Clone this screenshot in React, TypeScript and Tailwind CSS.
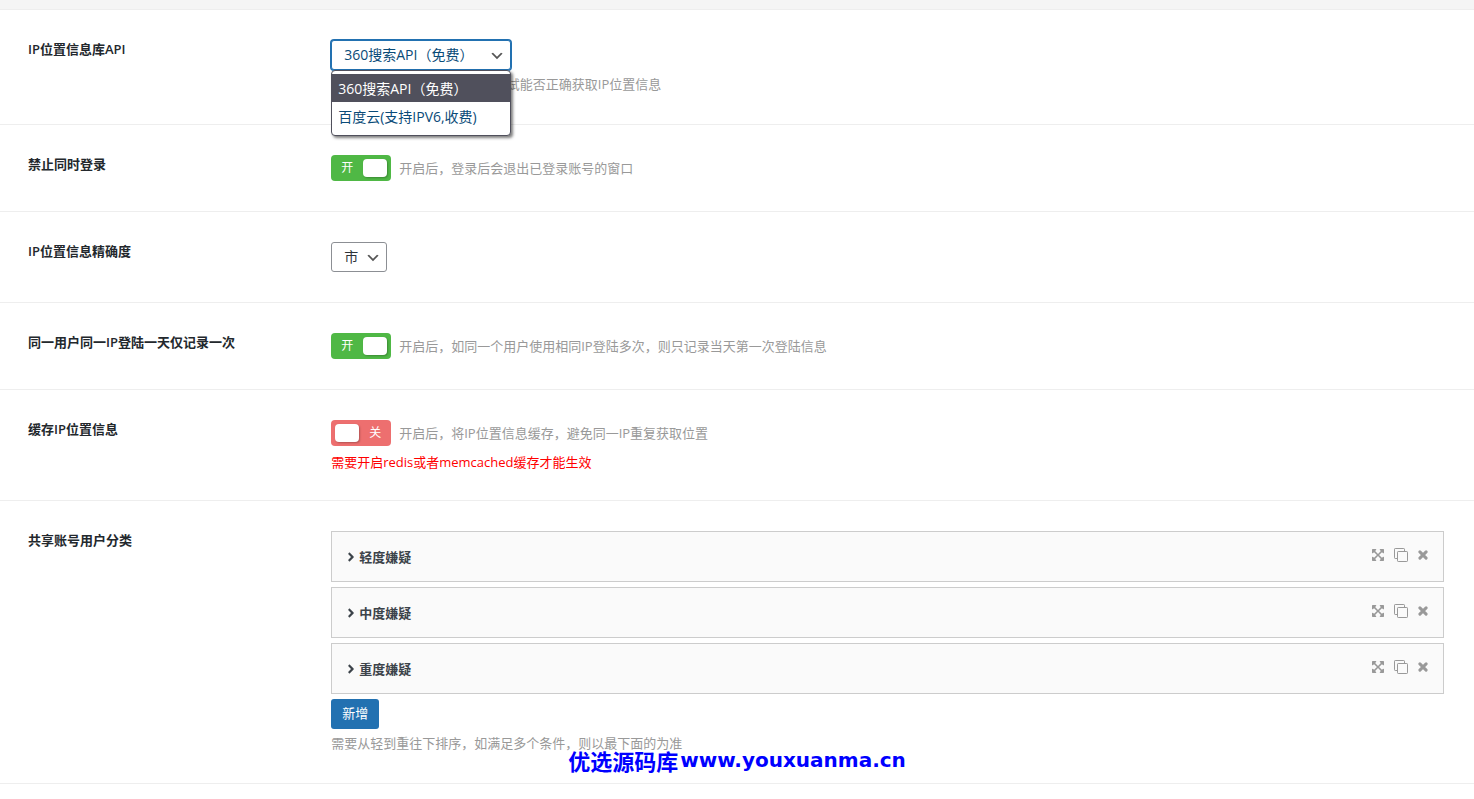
import React, { useState } from 'react';
import { FaAngleRight, FaExpandArrowsAlt } from 'react-icons/fa';

interface FieldProps {
  title: string;
  htmlFor?: string;
  children: React.ReactNode;
}

interface SwitcherProps {
  id: string;
  hint: string;
  defaultChecked?: boolean;
}

const apiOptions = ['360搜索API（免费）', '百度云(支持IPV6,收费)'];
const levels = ['轻度嫌疑', '中度嫌疑', '重度嫌疑'];

const Field: React.FC<FieldProps> = ({ title, htmlFor, children }) => (
  <div className="flex gap-5 border-b border-[#eee] py-[30px] pr-[30px] pl-7">
    <div className="w-1/5 shrink-0 text-[13px] leading-[18px] font-semibold text-[#23282d]">
      {htmlFor ? <label htmlFor={htmlFor}>{title}</label> : <h4>{title}</h4>}
    </div>
    <div className="min-w-0 flex-1">{children}</div>
  </div>
);

const Hint: React.FC<{ children: React.ReactNode }> = ({ children }) => (
  <p className="mt-1.5 pb-0.5 text-[13px] leading-4 text-[#999]">{children}</p>
);

const SelectArrow = () => (
  <svg
    viewBox="0 0 20 20"
    className="pointer-events-none absolute top-2 right-1.5 size-4 fill-[#555]"
    aria-hidden="true"
  >
    <path d="M5 6l5 5 5-5 2 1-7 7-7-7 2-1z" />
  </svg>
);

const CloneIcon = () => (
  <svg
    viewBox="0 0 14 14"
    className="size-3.5 fill-none stroke-current"
    strokeWidth="1"
    strokeLinejoin="round"
    aria-hidden="true"
  >
    <rect x="3.5" y="3.5" width="10" height="10" rx="0.7" />
    <path d="M3.5 10.5h-2.3a.7.7 0 0 1-.7-.7V1.2a.7.7 0 0 1 .7-.7h8.6a.7.7 0 0 1 .7.7v2.3" />
  </svg>
);

const CloseIcon = () => (
  <svg
    viewBox="0 0 10 14"
    className="h-3.5 w-2.5 fill-none stroke-current"
    strokeWidth="3"
    strokeLinecap="round"
    aria-hidden="true"
  >
    <path d="M1.9 3.9l6.2 6.2M8.1 3.9l-6.2 6.2" />
  </svg>
);

const Switcher: React.FC<SwitcherProps> = ({ id, hint, defaultChecked = false }) => {
  const [on, setOn] = useState(defaultChecked);

  return (
    <label className="flex items-center gap-2">
      <input
        id={id}
        type="checkbox"
        className="sr-only"
        checked={on}
        onChange={(e) => setOn(e.target.checked)}
      />
      <span
        className={`flex h-[26px] w-[60px] shrink-0 items-center justify-between rounded px-1 text-xs text-white ${
          on ? 'bg-[#4fb845]' : 'flex-row-reverse bg-[#ed6f6f]'
        }`}
      >
        <span className="w-6 text-center">{on ? '开' : '关'}</span>
        <span className="h-[18px] w-6 rounded bg-white shadow-[1px_1px_2px_rgba(0,0,0,0.25)]" />
      </span>
      <span className="text-[13px] leading-4 text-[#999]">{hint}</span>
    </label>
  );
};

export default function App() {
  const [api, setApi] = useState(apiOptions[0]);

  return (
    <div className="relative min-h-screen bg-white font-['Open_Sans','Noto_Sans_CJK_SC',sans-serif]">
      <div className="h-2.5 border-b border-[#eee] bg-[#f5f5f5]" />

      <Field title="IP位置信息库API" htmlFor="ip-api">
        <div className="relative w-[180px]">
          <select
            id="ip-api"
            value={api}
            onChange={(e) => setApi(e.target.value)}
            className="block h-[30px] w-full appearance-none rounded-[3px] border border-[#2271b1] bg-white pr-6 pl-3 text-sm text-[#0a4b78] shadow-[0_0_0_1px_#2271b1] outline-none"
          >
            {apiOptions.map((option) => (
              <option key={option}>{option}</option>
            ))}
          </select>
          <SelectArrow />
          <ul
            role="listbox"
            aria-label="IP位置信息库API"
            className="absolute top-full left-0 z-10 w-full rounded border border-[#50505c] bg-white pt-[3px] pb-[5px] text-sm shadow-[2px_2px_3px_rgba(0,0,0,0.5)]"
          >
            {apiOptions.map((option) => (
              <li
                key={option}
                role="option"
                aria-selected={option === api}
                onClick={() => setApi(option)}
                className={`px-1.5 pt-0.5 leading-[26px] whitespace-nowrap ${
                  option === api ? 'bg-[#50505c] text-white' : 'text-[#0a4b78]'
                }`}
              >
                {option}
              </li>
            ))}
          </ul>
        </div>
        <Hint>选择API后请在用户登录页面测试能否正确获取IP位置信息</Hint>
      </Field>

      <Field title="禁止同时登录" htmlFor="single-login">
        <Switcher id="single-login" hint="开启后，登录后会退出已登录账号的窗口" defaultChecked />
      </Field>

      <Field title="IP位置信息精确度" htmlFor="ip-precision">
        <div className="relative w-14">
          <select
            id="ip-precision"
            className="block h-[30px] w-full appearance-none rounded-[3px] border border-[#8c8f94] bg-white pl-3 text-sm text-[#2c3338]"
          >
            <option>市</option>
          </select>
          <SelectArrow />
        </div>
      </Field>

      <Field title="同一用户同一IP登陆一天仅记录一次" htmlFor="once-a-day">
        <Switcher
          id="once-a-day"
          hint="开启后，如同一个用户使用相同IP登陆多次，则只记录当天第一次登陆信息"
          defaultChecked
        />
      </Field>

      <Field title="缓存IP位置信息" htmlFor="ip-cache">
        <Switcher id="ip-cache" hint="开启后，将IP位置信息缓存，避免同一IP重复获取位置" />
        <p className="mt-2 text-[13px] leading-4 text-[#f00]">
          需要开启redis或者memcached缓存才能生效
        </p>
      </Field>

      <Field title="共享账号用户分类">
        <div className="flex flex-col items-start gap-[5px]">
          {levels.map((level) => (
            <div
              key={level}
              className="flex h-[51px] w-full items-center justify-between border border-[#ccc] bg-[#fafafa] pr-[15px] pl-[15px]"
            >
              <button
                type="button"
                className="flex items-center gap-1 text-[13px] leading-5 font-bold text-[#3c434a]"
              >
                <FaAngleRight className="h-3.5 w-2" />
                {level}
              </button>
              <div className="flex items-center gap-2.5 pb-[3px] text-[#999]">
                <button type="button" aria-label="移动">
                  <FaExpandArrowsAlt className="h-3.5 w-3" />
                </button>
                <button type="button" aria-label="复制">
                  <CloneIcon />
                </button>
                <button type="button" aria-label="删除">
                  <CloseIcon />
                </button>
              </div>
            </div>
          ))}
          <button
            type="button"
            className="h-[30px] rounded-[3px] bg-[#2271b1] px-[11px] text-[13px] text-white"
          >
            新增
          </button>
        </div>
        <Hint>需要从轻到重往下排序，如满足多个条件，则以最下面的为准</Hint>
      </Field>

      {/* Site watermark */}
      <div className="pointer-events-none absolute inset-x-0 top-[746px] flex items-center justify-center gap-0.5 text-[#00f]">
        <span className="font-['Noto_Sans_CJK_SC',sans-serif] text-[22px] leading-7 font-bold">
          优选源码库
        </span>
        <span className="font-['DejaVu_Sans',sans-serif] text-xl leading-7 font-bold">
          www.youxuanma.cn
        </span>
      </div>
    </div>
  );
}
